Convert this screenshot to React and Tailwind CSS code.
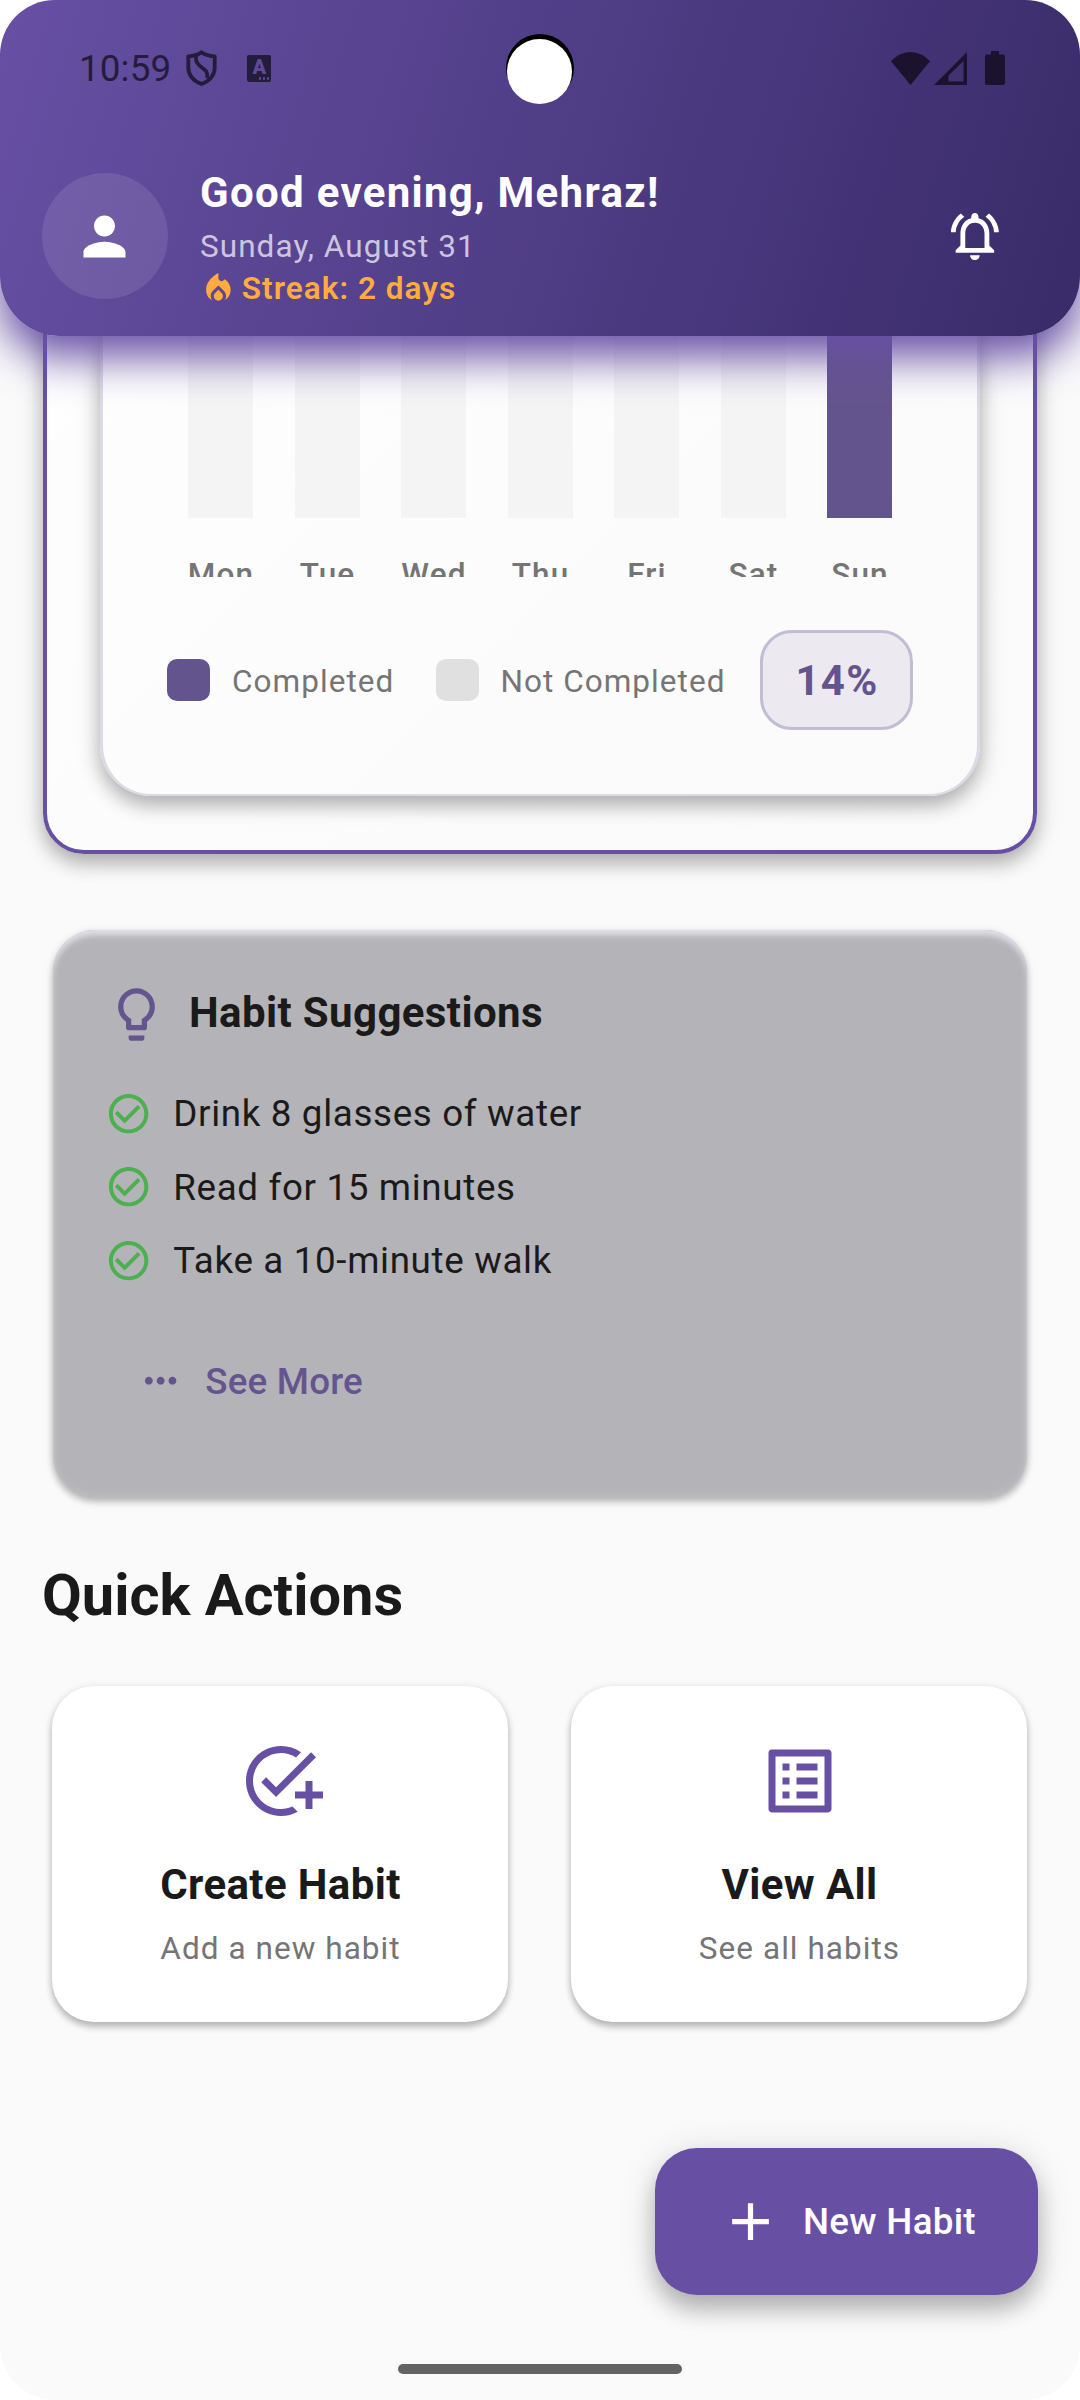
import React from "react";
import {
  MdPerson,
  MdLocalFireDepartment,
  MdOutlineNotificationsActive,
  MdOutlineLightbulb,
  MdCheckCircleOutline,
  MdMoreHoriz,
  MdAddTask,
  MdListAlt,
  MdAdd,
} from "react-icons/md";

const DAYS = [
  { label: "Mon", done: false },
  { label: "Tue", done: false },
  { label: "Wed", done: false },
  { label: "Thu", done: false },
  { label: "Fri", done: false },
  { label: "Sat", done: false },
  { label: "Sun", done: true },
];

const SUGGESTIONS = ["Drink 8 glasses of water", "Read for 15 minutes", "Take a 10-minute walk"];

const ACTIONS = [
  { title: "Create Habit", text: "Add a new habit", Icon: MdAddTask },
  { title: "View All", text: "See all habits", Icon: MdListAlt },
];

function ShieldIcon() {
  return (
    <svg className="ml-[15px] h-[36px] w-[31px]" viewBox="0 0 31 36" fill="none" stroke="#241c3b" strokeWidth="3.8" strokeLinejoin="round">
      <path d="M15.5 2.2C19 4.800 24 6 28.700 6.500V17.500c0 7.600-5.400 13.400-13.200 16.600C7.700 30.900 2.300 25.100 2.300 17.500V6.500C7 6 12 4.800 15.500 2.200z" />
      <path d="M11 4C8.800 9 9.500 12.500 14 16c5 4 8.500 5.500 7 12" />
    </svg>
  );
}

function KeyboardBadge() {
  return (
    <div className="relative ml-[30px] h-[27px] w-[24px] rounded-[2px] bg-[#241c3b]">
      <span className="absolute left-0 top-[2px] w-full text-center text-[20px] leading-[21px] font-black text-[#604a97]">A</span>
      <span className="absolute bottom-[2px] right-[2px] flex gap-[1.5px]">
        <i className="size-[2.5px] rounded-full bg-[#604a97]" />
        <i className="size-[2.5px] rounded-full bg-[#604a97]" />
        <i className="size-[2.5px] rounded-full bg-[#604a97]" />
      </span>
    </div>
  );
}

function StatusBar() {
  return (
    <div className="relative flex h-[136px] items-center pl-[79px] pr-[75px]">
      <span className="pt-[2px] text-[36.75px] leading-[40px] tracking-[0.15px] text-[#241c3b]">10:59</span>
      <ShieldIcon />
      <KeyboardBadge />
      <div className="absolute left-[506px] top-[34px] size-[68px] rounded-full bg-black" />
      <div className="absolute left-[507px] top-[39px] size-[65px] rounded-full bg-white" />
      <div className="ml-auto flex items-center">
        <svg className="h-[33px] w-[39px]" viewBox="0 0 39 33" fill="#1b132e">
          <path d="M19.5 33 0 9.300C5.300 3.500 12 0 19.500 0S33.700 3.500 39 9.300z" />
        </svg>
        <svg className="ml-[3.5px] h-[33px] w-[33px]" viewBox="0 0 33 33" fill="#1b132e" fillRule="evenodd">
          <path d="M33 0v33H0zM29.500 9 14.500 23.500V29.500H29.500z" />
        </svg>
        <svg className="ml-[18.5px] h-[34px] w-[20px]" viewBox="0 0 20 34" fill="#1b132e">
          <path d="M6 0h8v3.500h4a2 2 0 0 1 2 2V32a2 2 0 0 1-2 2H2a2 2 0 0 1-2-2V5.500a2 2 0 0 1 2-2h4z" />
        </svg>
      </div>
    </div>
  );
}

function Header() {
  return (
    <header className="relative z-10 h-[336px] rounded-b-[60px] bg-[linear-gradient(107.3deg,#6750a4,#392b69)] shadow-[0_21px_44px_#6750a4]">
      <StatusBar />
      <div className="flex items-start pl-[42px] pr-[76px] pt-[32px]">
        <div className="mt-[5px] flex size-[126px] items-center justify-center rounded-full bg-white/10">
          <MdPerson className="mr-px size-[63px] text-white" />
        </div>
        <div className="ml-[32px] flex flex-col">
          <h1 className="text-[42px] leading-[49px] font-bold tracking-[1.31px] text-white">Good evening, Mehraz!</h1>
          <p className="mt-[11px] text-[31.5px] leading-[37px] tracking-[1.05px] text-[#cdc5de]">Sunday, August 31</p>
          <p className="mt-[5px] flex items-center text-[31.5px] leading-[37px] font-semibold tracking-[1.05px] text-[#ffab40]">
            <MdLocalFireDepartment className="mr-[5px] size-[36.75px]" />
            Streak: 2 days
          </p>
        </div>
        <MdOutlineNotificationsActive className="ml-auto mt-[39px] size-[57.75px] text-white" />
      </div>
    </header>
  );
}

function WeeklyCard() {
  return (
    <section className="-mt-[60px] ml-[43px] w-[994px] rounded-[41px] border-4 border-[#6750a4] bg-[linear-gradient(135deg,#fefefe,#fafafa)] px-[53px] pb-[54px] shadow-[0_10px_18px_rgba(0,0,0,0.24),0_3px_30px_rgba(0,0,0,0.12)]">
      <div className="h-[516px] rounded-b-[51px] border-x-[3px] border-b-2 border-[#dcdae7] bg-[linear-gradient(135deg,#fefefe,#fafafa)] pt-[56px] shadow-[0_10px_18px_rgba(0,0,0,0.24),0_3px_30px_rgba(0,0,0,0.12)]">
        <div className="flex justify-between px-[85px]">
          {DAYS.map((d) => (
            <div key={d.label} className="flex w-[65px] flex-col items-center">
              <div className={d.done ? "h-[182px] w-full bg-[#64548d]" : "h-[182px] w-full bg-[#f4f4f4]"} />
              <div className="mt-[38px] h-[21px] overflow-hidden pl-px text-[31.5px] leading-[37px] font-medium tracking-[1.15px] whitespace-nowrap text-[#757575]">
                {d.label}
              </div>
            </div>
          ))}
        </div>
        <div className="mt-[53px] flex items-center pl-[64px] text-[31.5px] leading-[37px] tracking-[1.05px] whitespace-nowrap text-[#757575]">
          <span className="-mt-px h-[42px] w-[43px] rounded-[10px] bg-[#64548d]" />
          <span className="ml-[22px] mt-[3px]">Completed</span>
          <span className="-mt-px ml-[42px] h-[42px] w-[43px] rounded-[10px] bg-[#e0e0e0]" />
          <span className="ml-[21px] mt-[3px]">Not Completed</span>
          <span className="ml-[34px] flex h-[100px] w-[153px] items-center justify-center rounded-[32px] border-[3px] border-[#c2bcd4] bg-[#ece9f0] pl-[2px] text-[42px] font-bold tracking-[1.31px] text-[#64548d]">
            14%
          </span>
        </div>
      </div>
    </section>
  );
}

function SuggestionsCard() {
  return (
    <section className="mx-[53px] mt-[76px] h-[567px] rounded-[42px] bg-[#b4b3b8] pl-[52px] pt-[53px] shadow-[inset_0_7px_6px_-2px_#e2e1e8,inset_0_0_8px_#c3c2c7,0_5px_7px_rgba(0,0,0,0.24),0_1px_8px_rgba(0,0,0,0.10)]">
      <div className="flex">
        <MdOutlineLightbulb className="size-[63px] text-[#65558f]" />
        <h2 className="ml-[21px] text-[42px] leading-[60px] font-bold tracking-[0.39px] text-[#1a1a1a]">Habit Suggestions</h2>
      </div>
      <ul className="mt-[30.5px]">
        {SUGGESTIONS.map((s) => (
          <li key={s} className="flex h-[73.5px] items-center text-[36.75px] leading-[44px] tracking-[0.66px] text-[#1a1a1a]">
            <MdCheckCircleOutline className="mr-[21px] size-[47.25px] text-[#4caf50]" />
            <span className="pt-[2px]">{s}</span>
          </li>
        ))}
      </ul>
      <button className="mt-[47px] flex h-[74px] items-center pl-[32px] text-[36.75px] leading-[42px] font-medium tracking-[0.2px] text-[#65558f]">
        <MdMoreHoriz className="mr-[21px] size-[47.25px]" />
        <span className="pt-[2px]">See More</span>
      </button>
    </section>
  );
}

function QuickActions() {
  return (
    <section className="mt-[64px] px-[42px]">
      <h2 className="text-[57.75px] leading-[68px] font-bold text-[#1a1a1a]">Quick Actions</h2>
      <div className="mt-[57px] flex gap-[63px] px-[10px]">
        {ACTIONS.map(({ title, text, Icon }) => (
          <button
            key={title}
            className="flex h-[336px] w-[456px] flex-col items-center rounded-[42px] bg-white pl-px pt-[53px] shadow-[0_5px_7px_rgba(0,0,0,0.24),0_1px_8px_rgba(0,0,0,0.10)]"
          >
            <Icon className="size-[84px] text-[#6750a4]" />
            <span className="mt-[37px] text-[42px] leading-[49px] font-bold tracking-[0.39px] text-[#1a1a1a]">{title}</span>
            <span className="mt-[21px] text-[31.5px] leading-[37px] tracking-[1.05px] text-[#757575]">{text}</span>
          </button>
        ))}
      </div>
    </section>
  );
}

export default function App() {
  return (
    <div className="h-[2400px] w-[1080px] bg-white font-['Roboto',sans-serif]">
      <div className="flex h-full flex-col overflow-hidden rounded-[55px] bg-[#fafafa]">
        <Header />
        <main className="flex flex-col">
          <WeeklyCard />
          <SuggestionsCard />
          <QuickActions />
        </main>
        <button className="mr-[42px] mt-[126px] flex h-[147px] w-[383px] items-center self-end rounded-[42px] bg-[#6750a4] pl-[64px] text-[36.75px] leading-[42px] font-medium tracking-[0.28px] whitespace-nowrap text-white shadow-[0_15px_22px_rgba(0,0,0,0.24),0_4px_38px_rgba(0,0,0,0.12)]">
          <MdAdd className="mr-[21px] size-[63px]" />
          <span className="pt-px">New Habit</span>
        </button>
        <div className="mt-[69px] h-[10px] w-[284px] self-center rounded-full bg-[#636363]" />
      </div>
    </div>
  );
}
